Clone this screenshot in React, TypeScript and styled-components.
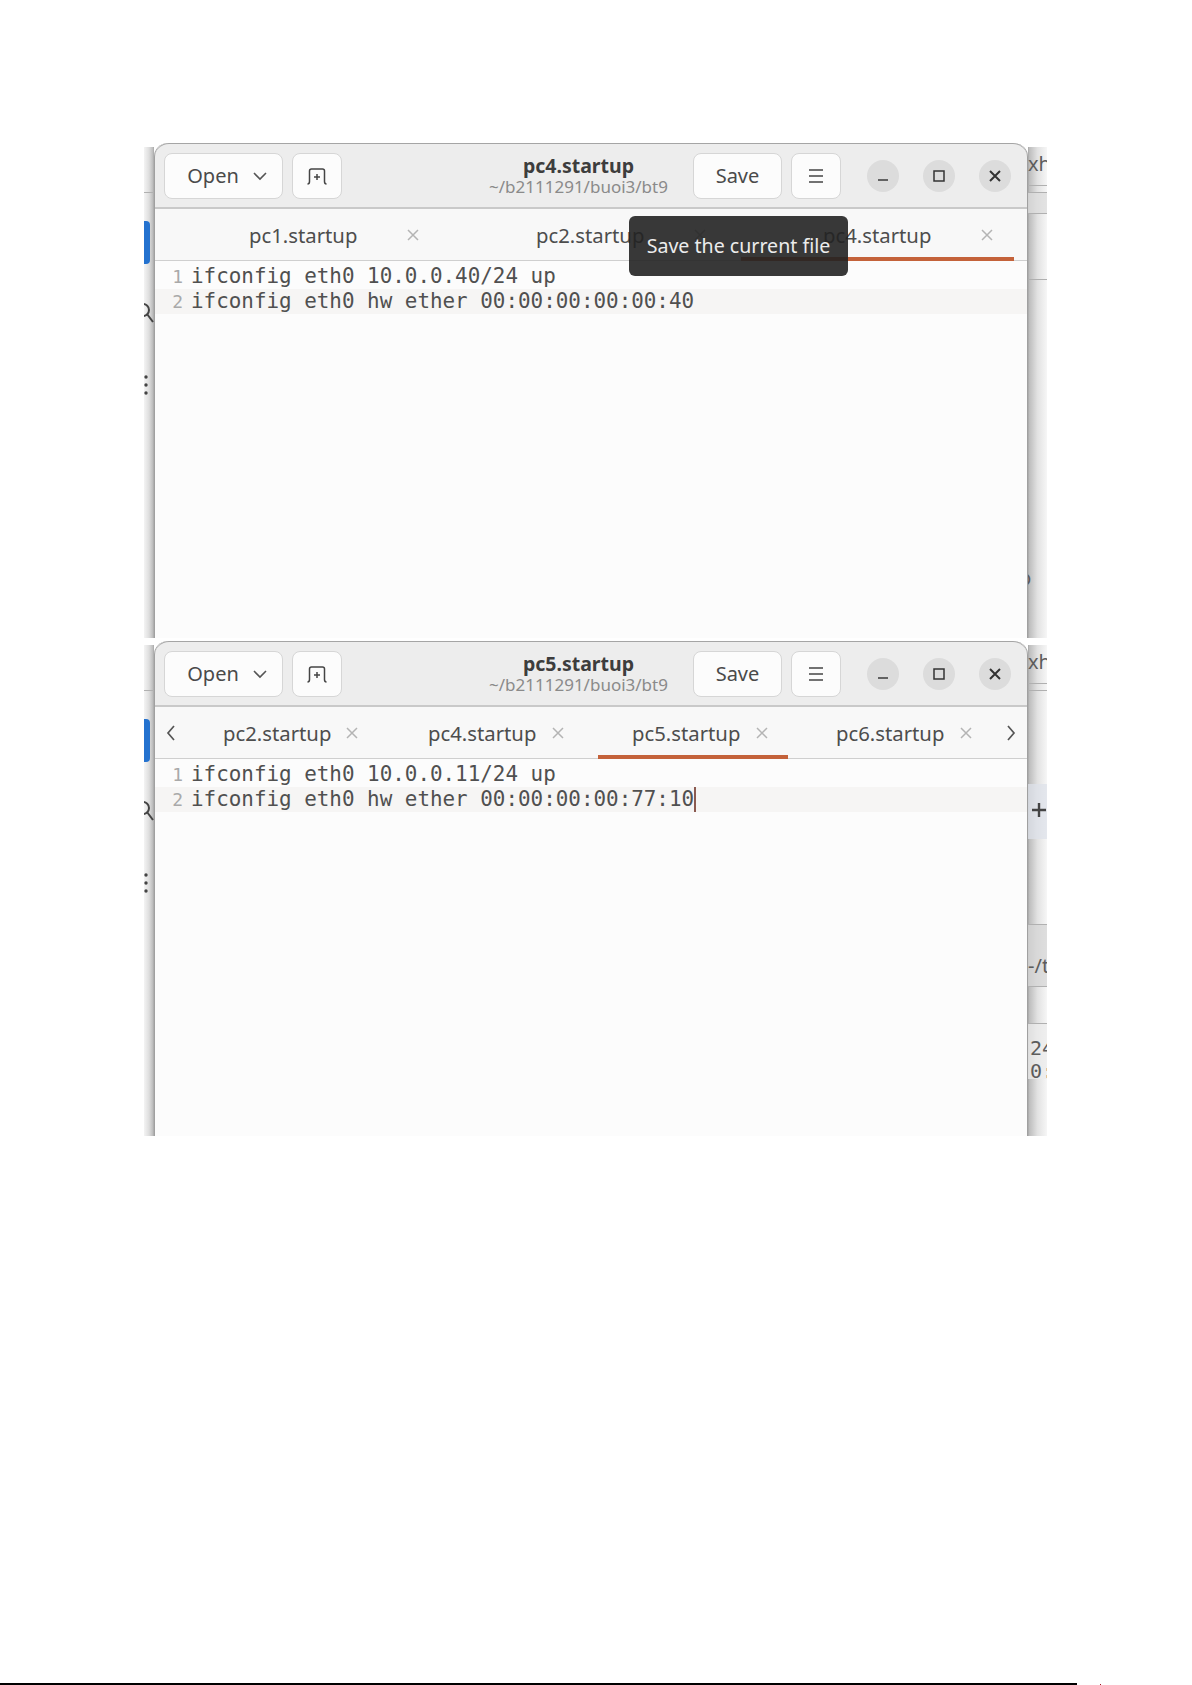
import React from "react";
import styled, { createGlobalStyle } from "styled-components";

const Global = createGlobalStyle`
  html, body { margin: 0; padding: 0; background: #fff; }
  #root { width: 1192px; height: 1685px; position: relative; overflow: hidden; }
`;

const Page = styled.div`
  width: 1192px;
  height: 1685px;
  display: flex;
  flex-direction: column;
  align-items: flex-start;
  padding: 143px 0 0 144px;
  box-sizing: border-box;
  position: relative;
`;

const Shot = styled.div<{ $gap?: number }>`
  width: 903px;
  height: 495px;
  margin-top: ${(p) => p.$gap ?? 0}px;
  display: flex;
  overflow: hidden;
  flex-shrink: 0;
  position: relative;
`;

const LeftStrip = styled.div`
  width: 10px;
  flex-shrink: 0;
  margin-top: 4px;
  position: relative;
  overflow: hidden;
  background: linear-gradient(90deg, #f4f4f4 0%, #dedede 50%, #bdbdbd 88%, #a6a6a6 100%);
`;

const RightStrip = styled.div`
  width: 19px;
  flex-shrink: 0;
  margin-top: 4px;
  position: relative;
  overflow: hidden;
  background: linear-gradient(90deg, #a6a6a6 0%, #bebebe 8%, #e2e2e2 50%, #f6f6f6 100%);
`;

const Fragment = styled.div<{ $top: number; $left?: number }>`
  position: absolute;
  top: ${(p) => p.$top - 4}px;
  left: ${(p) => p.$left ?? 0}px;
`;

const BlueBit = styled(Fragment)`
  width: 6px;
  height: 43px;
  background: #2472cf;
  border-radius: 0 4px 4px 0;
`;

const Rule = styled(Fragment)`
  width: 100%;
  height: 1px;
  background: #b0b0b0;
`;

const Band = styled(Fragment)<{ $h: number; $bg: string }>`
  width: 100%;
  height: ${(p) => p.$h}px;
  background: ${(p) => p.$bg};
  opacity: 0.75;
`;

const PeekText = styled(Fragment)<{ $mono?: boolean }>`
  font-family: ${(p) => (p.$mono ? '"DejaVu Sans Mono", monospace' : '"Noto Sans", sans-serif')};
  font-size: 20px;
  line-height: 24px;
  color: #5c5c5c;
  white-space: nowrap;
`;

const Window = styled.div`
  width: 874px;
  height: 495px;
  flex-shrink: 0;
  display: flex;
  flex-direction: column;
  background: #fcfcfc;
  border-radius: 14px 14px 0 0;
  border-left: 1px solid #a0a0a0;
  border-right: 1px solid #a0a0a0;
  box-sizing: border-box;
  position: relative;
`;

const Header = styled.header`
  height: 66px;
  flex-shrink: 0;
  box-sizing: border-box;
  display: flex;
  align-items: center;
  padding: 0 16px 0 9px;
  background: #ededed;
  border-top: 1px solid #a5a5a5;
  border-bottom: 2px solid #c9c9c9;
  border-radius: 14px 14px 0 0;
`;

const Button = styled.button<{ $w: number; $ml?: number; $pl?: number }>`
  width: ${(p) => p.$w}px;
  height: 46px;
  margin-left: ${(p) => p.$ml ?? 0}px;
  flex-shrink: 0;
  display: flex;
  align-items: center;
  justify-content: center;
  gap: 13px;
  padding: 0 0 0 ${(p) => p.$pl ?? 0}px;
  background: #fcfcfc;
  border: 1px solid #d6d6d6;
  border-radius: 8px;
  font-family: "Noto Sans", sans-serif;
  font-size: 20px;
  color: #4a4a4a;
`;

const Title = styled.div`
  flex: 1;
  display: flex;
  flex-direction: column;
  align-items: center;
  padding-left: 122px;
  font-family: "Noto Sans", sans-serif;
`;

const TitleName = styled.div`
  font-size: 19.5px;
  line-height: 22px;
  font-weight: 700;
  color: #3d3d3d;
`;

const TitlePath = styled.div`
  font-size: 17px;
  line-height: 20px;
  color: #8a8a8a;
  white-space: nowrap;
`;

const WinControls = styled.div`
  display: flex;
  gap: 24px;
  margin-left: 26px;
`;

const WinControl = styled.div`
  width: 32px;
  height: 32px;
  border-radius: 50%;
  background: #dcdcdc;
  display: flex;
  align-items: center;
  justify-content: center;
`;

const TabBar = styled.div`
  height: 52px;
  flex-shrink: 0;
  box-sizing: border-box;
  display: flex;
  background: #f8f8f8;
  border-bottom: 1px solid #cfcfcf;
  position: relative;
`;

const Tab = styled.div<{ $w: number; $active?: boolean; $pad: number; $gap: number }>`
  width: ${(p) => p.$w}px;
  flex-shrink: 0;
  box-sizing: border-box;
  display: flex;
  align-items: center;
  padding: 3px 0 0 ${(p) => p.$pad}px;
  gap: ${(p) => p.$gap}px;
  margin-bottom: -1px;
  border-bottom: 4px solid ${(p) => (p.$active ? "#c4623a" : "transparent")};
  font-family: "Noto Sans", sans-serif;
  font-size: 20.3px;
  color: #4d4d4d;
`;

const Arrow = styled.div<{ $w: number }>`
  width: ${(p) => p.$w}px;
  flex-shrink: 0;
  display: flex;
  align-items: center;
  justify-content: center;
`;

const Editor = styled.div`
  flex: 1;
  padding-top: 3px;
  font-family: "DejaVu Sans Mono", monospace;
  font-size: 20.9px;
  line-height: 25px;
  color: #505050;
`;

const Line = styled.div<{ $current?: boolean }>`
  display: flex;
  height: 25px;
  background: ${(p) => (p.$current ? "#f6f5f4" : "transparent")};
  white-space: pre;
`;

const Gutter = styled.span`
  width: 36px;
  box-sizing: border-box;
  padding-right: 8px;
  text-align: right;
  color: #a9a9a9;
  font-size: 18px;
`;

const Caret = styled.span`
  display: inline-block;
  width: 2px;
  height: 25px;
  background: #8b5a50;
  vertical-align: top;
`;

const Tooltip = styled.div`
  position: absolute;
  left: 474px;
  top: 73px;
  width: 219px;
  height: 60px;
  box-sizing: border-box;
  border-radius: 6px;
  background: rgba(34, 34, 34, 0.9);
  color: #ececec;
  font-family: "Noto Sans", sans-serif;
  font-size: 19.6px;
  display: flex;
  align-items: center;
  justify-content: center;
  padding-bottom: 2px;
  z-index: 2;
`;

const Footer = styled.div`
  position: absolute;
  top: 1683px;
  left: 0;
  width: 1077px;
  height: 2px;
  background: #000;
`;

const FooterSpeck = styled.div`
  position: absolute;
  top: 1684px;
  left: 1100px;
  width: 1px;
  height: 1px;
  background: #a01020;
`;

const Chevron = () => (
  <svg width="16" height="10" viewBox="0 0 16 10" fill="none" stroke="#555" strokeWidth="1.6">
    <path d="M2 2l6 6 6-6" />
  </svg>
);
const NewTabIcon = () => (
  <svg width="24" height="24" viewBox="0 0 24 24" fill="none" stroke="#444" strokeWidth="1.5">
    <path d="M2.500 20c1.500 0 2-.5 2-2.500V7c0-1.500.5-2 2-2h11c1.500 0 2 .5 2 2v10.500c0 2 .5 2.500 2 2.500" />
    <path d="M12 10v6M9 13h6" />
  </svg>
);
const MenuIcon = () => (
  <svg width="18" height="16" viewBox="0 0 18 16" stroke="#444" strokeWidth="1.5">
    <path d="M2 2h14M2 8h14M2 14h14" />
  </svg>
);
const MinIcon = () => (
  <svg width="14" height="14" viewBox="0 0 14 14" stroke="#444" strokeWidth="1.6">
    <path d="M2 11h10" />
  </svg>
);
const MaxIcon = () => (
  <svg width="14" height="14" viewBox="0 0 14 14" fill="none" stroke="#333" strokeWidth="1.5">
    <rect x="2" y="2" width="10" height="10" />
  </svg>
);
const CloseIcon = () => (
  <svg width="14" height="14" viewBox="0 0 14 14" stroke="#333" strokeWidth="2">
    <path d="M2 2l10 10M12 2L2 12" />
  </svg>
);
const TabClose = () => (
  <svg width="12" height="12" viewBox="0 0 12 12" stroke="#b4b4b4" strokeWidth="1.5" style={{ flexShrink: 0 }}>
    <path d="M1 1l10 10M11 1L1 11" />
  </svg>
);
const Side = ({ d }: { d: string }) => (
  <svg width="12" height="18" viewBox="0 0 12 18" fill="none" stroke="#555" strokeWidth="1.7">
    <path d={d} />
  </svg>
);
const SearchBit = () => (
  <svg width="10" height="24" viewBox="0 0 10 24" fill="none" stroke="#444" strokeWidth="2">
    <circle cx="-1" cy="8" r="6" />
    <path d="M3 12l6 8" />
  </svg>
);
const DotsBit = () => (
  <svg width="6" height="24" viewBox="0 0 6 24" fill="#444">
    <circle cx="2" cy="3" r="1.700" />
    <circle cx="2" cy="11" r="1.700" />
    <circle cx="2" cy="19" r="1.700" />
  </svg>
);
const PlusBit = () => (
  <svg width="16" height="16" viewBox="0 0 16 16" stroke="#444" strokeWidth="2.400">
    <path d="M8 1v14M1 8h14" />
  </svg>
);

type Props = {
  name: string;
  ip: string;
  mac: React.ReactNode;
  tabs: React.ReactNode;
  children?: React.ReactNode;
  right?: React.ReactNode;
  gap?: number;
};

const EditorWindow = ({ name, ip, mac, tabs, children, right, gap }: Props) => (
  <Shot $gap={gap}>
    <LeftStrip>
      <Rule $top={49} />
      <BlueBit $top={78} />
      <Fragment $top={159}>
        <SearchBit />
      </Fragment>
      <Fragment $top={231}>
        <DotsBit />
      </Fragment>
    </LeftStrip>
    <Window>
      <Header>
        <Button $w={119} $pl={8}>
          Open
          <Chevron />
        </Button>
        <Button $w={50} $ml={9}>
          <NewTabIcon />
        </Button>
        <Title>
          <TitleName>{name}</TitleName>
          <TitlePath>~/b2111291/buoi3/bt9</TitlePath>
        </Title>
        <Button $w={89}>Save</Button>
        <Button $w={50} $ml={9}>
          <MenuIcon />
        </Button>
        <WinControls>
          <WinControl>
            <MinIcon />
          </WinControl>
          <WinControl>
            <MaxIcon />
          </WinControl>
          <WinControl>
            <CloseIcon />
          </WinControl>
        </WinControls>
      </Header>
      <TabBar>{tabs}</TabBar>
      <Editor>
        <Line>
          <Gutter>1</Gutter>
          {`ifconfig eth0 ${ip}/24 up`}
        </Line>
        <Line $current>
          <Gutter>2</Gutter>
          {mac}
        </Line>
      </Editor>
      {children}
    </Window>
    <RightStrip>{right}</RightStrip>
  </Shot>
);

const TabItem = ({
  w,
  pad,
  gap,
  label,
  active,
}: {
  w: number;
  pad: number;
  gap: number;
  label: string;
  active?: boolean;
}) => (
  <Tab $w={w} $pad={pad} $gap={gap} $active={active}>
    {label}
    <TabClose />
  </Tab>
);

export default function App() {
  return (
    <>
      <Global />
      <Page>
        <EditorWindow
          name="pc4.startup"
          ip="10.0.0.40"
          mac="ifconfig eth0 hw ether 00:00:00:00:00:40"
          tabs={
            <>
              <TabItem w={287} pad={94} gap={50} label="pc1.startup" />
              <TabItem w={299} pad={94} gap={50} label="pc2.startup" />
              <TabItem w={273} pad={82} gap={50} label="pc4.startup" active />
            </>
          }
          right={
            <>
              <PeekText $top={9} $left={0}>xh</PeekText>
              <Rule $top={42} />
              <Band $top={50} $h={20} $bg="#dcdcdc" />
              <Rule $top={49} />
              <Rule $top={70} />
              <Rule $top={136} />
              <PeekText $top={423} $left={-9}>p</PeekText>
            </>
          }
        >
          <Tooltip>Save the current file</Tooltip>
        </EditorWindow>
        <EditorWindow
          gap={3}
          name="pc5.startup"
          ip="10.0.0.11"
          mac={
            <>
              ifconfig eth0 hw ether 00:00:00:00:77:10
              <Caret />
            </>
          }
          tabs={
            <>
              <Arrow $w={32}>
                <Side d="M9 2L3 9l6 7" />
              </Arrow>
              <TabItem w={204} pad={36} gap={15} label="pc2.startup" />
              <TabItem w={207} pad={37} gap={16} label="pc4.startup" />
              <TabItem w={190} pad={34} gap={16} label="pc5.startup" active />
              <TabItem w={207} pad={48} gap={16} label="pc6.startup" />
              <Arrow $w={32}>
                <Side d="M3 2l6 7-6 7" />
              </Arrow>
            </>
          }
          right={
            <>
              <PeekText $top={9} $left={0}>xh</PeekText>
              <Rule $top={42} />
              <Rule $top={49} />
              <Band $top={143} $h={55} $bg="#dde1ea" />
              <Fragment $top={161} $left={3}>
                <PlusBit />
              </Fragment>
              <Band $top={283} $h={62} $bg="#d6d6d6" />
              <Rule $top={283} />
              <PeekText $top={313} $left={0}>-/t</PeekText>
              <Rule $top={345} />
              <Band $top={382} $h={56} $bg="#ececec" />
              <Rule $top={382} />
              <PeekText $mono $top={395} $left={2}>24</PeekText>
              <PeekText $mono $top={418} $left={2}>0:</PeekText>
            </>
          }
        />
        <Footer />
        <FooterSpeck />
      </Page>
    </>
  );
}
